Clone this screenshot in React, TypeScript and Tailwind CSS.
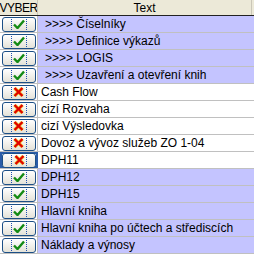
import React from 'react';

type Row = { text: string; checked: boolean; indent?: boolean; focused?: boolean };

const rows: Row[] = [
  { text: '>>>> Číselníky', checked: true, indent: true },
  { text: '>>>> Definice výkazů', checked: true, indent: true },
  { text: '>>>> LOGIS', checked: true, indent: true },
  { text: '>>>> Uzavření a otevření knih', checked: true, indent: true },
  { text: 'Cash Flow', checked: false },
  { text: 'cizí Rozvaha', checked: false },
  { text: 'cizí Výsledovka', checked: false },
  { text: 'Dovoz a vývoz služeb ZO 1-04', checked: false },
  { text: 'DPH11', checked: false, focused: true },
  { text: 'DPH12', checked: true },
  { text: 'DPH15', checked: true },
  { text: 'Hlavní kniha', checked: true },
  { text: 'Hlavní kniha po účtech a střediscích', checked: true },
  { text: 'Náklady a výnosy', checked: true },
];

function Mark({ checked }: { checked: boolean }) {
  if (checked) {
    return (
      <svg width="12" height="10" viewBox="0 0 12 10">
        <path d="M1 5.5 L4.5 9 L11 1.5" fill="none" stroke="#138a13" strokeWidth="2.4" />
      </svg>
    );
  }
  return (
    <svg width="11" height="10" viewBox="0 0 11 10">
      <path d="M1.5 1 L9.5 9 M9.5 1 L1.5 9" fill="none" stroke="#f0c020" strokeWidth="3.4" />
      <path d="M1.5 1 L9.5 9 M9.5 1 L1.5 9" fill="none" stroke="#e00000" strokeWidth="2.2" />
    </svg>
  );
}

function CheckButton({ checked }: { checked: boolean }) {
  return (
    <div className="w-[34px] h-[15px] rounded-[3px] border border-[#1c4f86] bg-gradient-to-b from-white to-[#e4e2d8] flex items-center justify-center">
      <div className="h-[11px] w-[16px] border-x border-dotted border-[#2050b0] flex items-center justify-center">
        <Mark checked={checked} />
      </div>
    </div>
  );
}

export default function App() {
  return (
    <div
      className="w-[254px] h-[255px] overflow-hidden bg-white text-[12px] text-black leading-none"
      style={{ fontFamily: '"Liberation Sans", Arial, sans-serif' }}
    >
      <div className="flex h-[16px] bg-[#ece9d8] border-b border-[#222]">
        <div className="w-[38px] flex items-center justify-center border-r border-[#cbc7b8] overflow-hidden">
          <span className="tracking-[-0.5px]">VYBER</span>
        </div>
        <div className="flex-1 flex items-center justify-center border-r border-[#cbc7b8]">
          Text
        </div>
        <div className="w-[2px]" />
      </div>
      {rows.map((r, i) => (
        <div key={i} className="flex h-[17px] border-b border-[#c0c0c0]">
          <div
            className={
              r.focused
                ? 'w-[38px] flex items-center justify-center border-2 border-[#2a5ca8]'
                : 'w-[38px] flex items-center justify-center border-r border-[#c0c0c0]'
            }
          >
            <CheckButton checked={r.checked} />
          </div>
          <div
            className={
              (r.checked ? 'bg-[#c4c4ff] ' : 'bg-white ') +
              (r.indent ? 'pl-[7px] ' : 'pl-[3px] ') +
              'flex-1 flex items-center whitespace-nowrap overflow-hidden'
            }
          >
            {r.text}
          </div>
        </div>
      ))}
    </div>
  );
}
